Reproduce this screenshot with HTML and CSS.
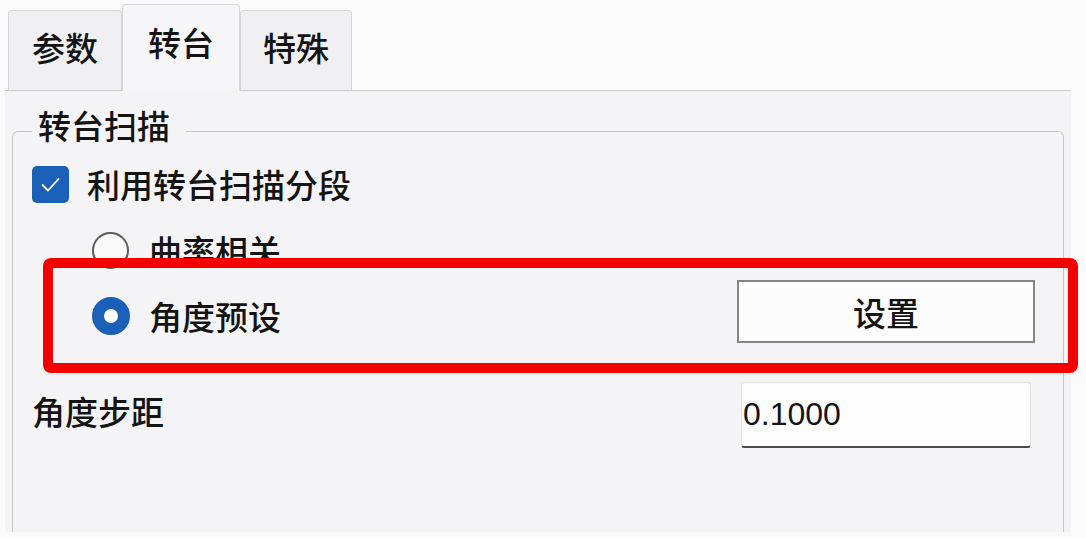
FILE: index.html
```html
<!DOCTYPE html>
<html lang="zh-CN">
<head>
  <meta charset="UTF-8" />
  <title>转台</title>
  <link rel="stylesheet" href="styles.css">
</head>
<body>
  <div class="tab-strip">
    <div class="tab tab-params">参数</div>
    <div class="tab tab-active">转台</div>
    <div class="tab tab-special">特殊</div>
  </div>

  <div class="tab-panel">
    <div class="group-box">
      <div class="group-title">转台扫描</div>

      <label class="check-row">
        <span class="check-box">
          <svg width="37" height="37" viewBox="0 0 37 37">
            <polyline points="10.5,19 16,24.5 26.5,13" fill="none" stroke="#ffffff" stroke-width="1.8" stroke-linecap="round" stroke-linejoin="round" />
          </svg>
        </span>
        利用转台扫描分段
      </label>

      <div class="radio-row">
        <span class="radio"></span>
        曲率相关
      </div>

      <div class="preset-row">
        <div class="radio-label">
          <span class="radio radio-checked"></span>
          角度预设
        </div>
        <button class="set-button">设置</button>
      </div>

      <div class="field-row">
        <span class="field-label">角度步距</span>
        <input class="field-input" type="text" value="0.1000" />
      </div>

      <div class="highlight-frame"></div>
    </div>
  </div>
</body>
</html>
```

FILE: styles.css
```css
* {
  margin: 0;
  padding: 0;
  box-sizing: border-box;
}
html, body {
  height: 100%;
  background: #fafafb;
  overflow: hidden;
  font-family: "Noto Sans CJK SC", "Noto Sans", sans-serif;
  font-size: 33px;
  font-weight: 500;
  color: #141414;
}
.tab-strip {
  display: flex;
  align-items: flex-end;
  height: 91px;
  margin: 0 15px 0 5px;
  padding-left: 3px;
  border-bottom: 1px solid #c9c9cc;
}
.tab {
  height: 80px;
  padding: 17px 23px 0 23px;
  line-height: 38px;
  background: #f0f0f2;
  border: 1px solid #d6d6d9;
  border-bottom: none;
  border-radius: 4px 4px 0 0;
}
.tab-active {
  height: 87px;
  padding: 18px 25px 0 25px;
  margin-bottom: -1px;
  background: #f6f6f8;
  position: relative;
  z-index: 1;
}
.tab-special {
  padding: 17px 22px 0 22px;
}
.tab-panel {
  height: 441px;
  margin: 0 15px 0 5px;
  padding: 40px 7px 0 7px;
  background: #f4f4f6;
}
.group-box {
  position: relative;
  height: 401px;
  padding: 0 0 0 19px;
  border: 1px solid #c6c6ca;
  border-bottom: none;
  border-radius: 6px 6px 0 0;
}
.group-title {
  width: fit-content;
  margin-top: -26px;
  padding: 0 16px 0 6px;
  line-height: 38px;
  background: #f4f4f6;
}
.check-row {
  display: flex;
  align-items: center;
  gap: 18px;
  height: 38px;
  margin-top: 21px;
}
.check-box {
  width: 37px;
  height: 37px;
  border-radius: 5px;
  background: #1a5fb8;
}
.check-box svg {
  display: block;
}
.radio-row {
  display: flex;
  align-items: center;
  gap: 20px;
  height: 38px;
  margin: 28px 0 0 60px;
}
.radio {
  display: inline-block;
  width: 37px;
  height: 37px;
  border: 2px solid #5c5c5e;
  border-radius: 50%;
  background: #f9f9fa;
}
.radio-checked {
  width: 38px;
  height: 38px;
  border: 12px solid #1a5fb8;
  background: #ffffff;
}
.preset-row {
  display: flex;
  justify-content: space-between;
  margin-top: 11px;
}
.radio-label {
  display: flex;
  align-items: center;
  gap: 19px;
  height: 38px;
  margin: 17px 0 0 60px;
}
.set-button {
  width: 298px;
  height: 63px;
  margin-right: 28px;
  font-family: inherit;
  font-size: 33px;
  font-weight: 500;
  color: #141414;
  background: #fcfcfc;
  border: 2px solid #858587;
}
.field-row {
  display: flex;
  justify-content: space-between;
  margin-top: 39px;
}
.field-label {
  padding-top: 10px;
  line-height: 38px;
}
.field-input {
  width: 290px;
  height: 66px;
  margin-right: 32px;
  padding-left: 1px;
  font-family: "Liberation Sans", Arial, sans-serif;
  font-size: 32px;
  color: #141414;
  background: #fdfdfd;
  border: 1px solid #e3e3e6;
  border-bottom: 2px solid #4a4a4c;
  border-radius: 3px;
  outline: none;
}
.highlight-frame {
  position: absolute;
  left: 30px;
  top: 126px;
  width: 1035px;
  height: 115px;
  border: 10px solid #f40000;
  border-radius: 8px;
  pointer-events: none;
}
```
